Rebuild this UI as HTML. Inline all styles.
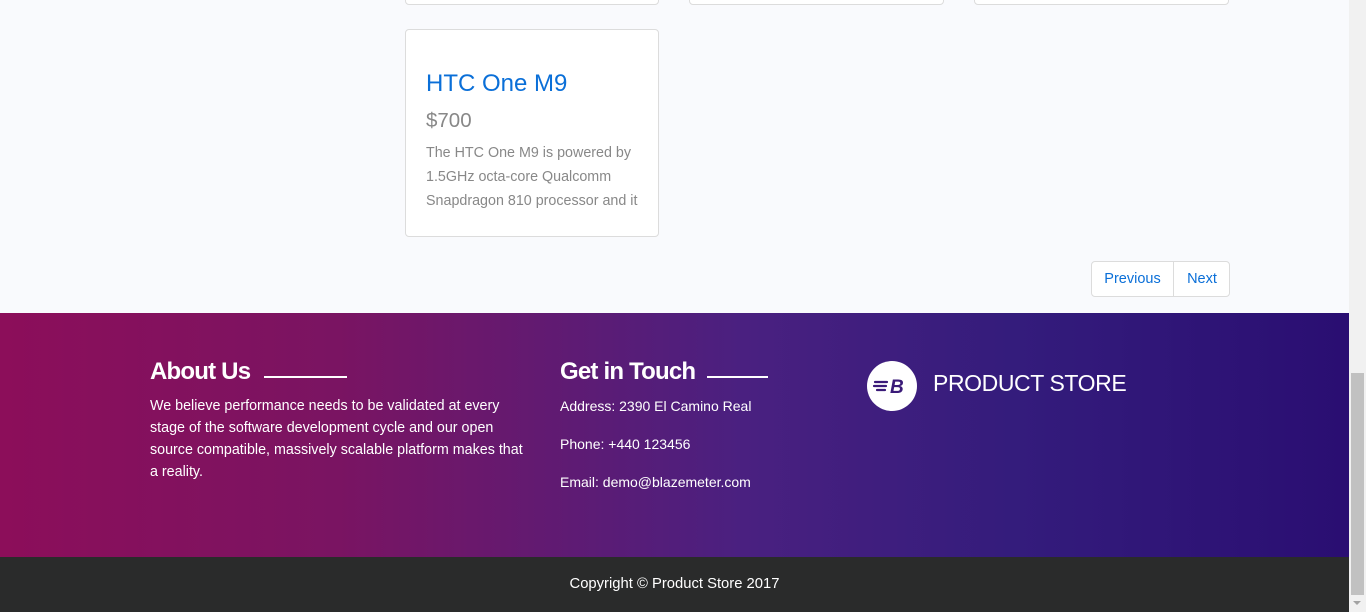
<!DOCTYPE html>
<html><head><meta charset="utf-8"><style>
*{box-sizing:border-box;margin:0;padding:0}
body{width:1366px;height:612px;overflow:hidden;background:#f1f1f1;font-family:"Liberation Sans",sans-serif;position:relative}
.page{position:absolute;left:0;top:0;width:1349px;height:612px;background:#f9fafd}
.card{position:absolute;background:#fff;border:1px solid #dcdcdc;border-radius:4px}
.footer{position:absolute;left:0;top:313px;width:1349px;height:244px;background:linear-gradient(90deg,#8c0e5a 0%,#7a1462 25%,#4a2080 55%,#341c7c 75%,#2a0e72 100%);color:#fff}
.bottom{position:absolute;left:0;top:557px;width:1349px;height:55px;background:#2a2b2b;color:#fff;font-size:14.8px;text-align:center;line-height:54px}
h3{position:absolute;font-size:24px;font-weight:bold;letter-spacing:-0.8px}
.line{position:absolute;height:2px;background:#fff}
.txt{position:absolute;font-size:14px;line-height:22px;white-space:nowrap}
.sb{position:absolute;left:1349px;top:0;width:17px;height:612px;background:#f1f1f1}
.thumb{position:absolute;left:1351px;top:373px;width:13px;height:222px;background:#c1c1c1}
</style></head><body>
<div class="page">
<div class="card" style="left:405px;top:-10px;width:254px;height:15px"></div>
<div class="card" style="left:689px;top:-10px;width:255px;height:15px"></div>
<div class="card" style="left:974px;top:-10px;width:255px;height:15px"></div>
<div class="card" style="left:405px;top:29px;width:254px;height:208px">
<div style="position:absolute;left:20px;top:40px;font-size:24px;color:#0a6fd8">HTC One M9</div>
<div style="position:absolute;left:20px;top:79px;font-size:20.5px;color:#888">$700</div>
<div style="position:absolute;left:20px;top:111px;font-size:14.3px;line-height:24px;color:#888;width:232px;white-space:nowrap">The HTC One M9 is powered by<br>1.5GHz octa-core Qualcomm<br>Snapdragon 810 processor and it</div>
</div>
<div style="position:absolute;left:1091px;top:261px;width:139px;height:36px;border:1px solid #dcdcdc;border-radius:4px;background:#fff;font-size:14.5px;color:#0a6fd8">
<div style="position:absolute;left:0;top:0;width:82px;height:34px;line-height:34px;text-align:center;border-right:1px solid #dcdcdc">Previous</div>
<div style="position:absolute;left:82px;top:0;width:56px;height:34px;line-height:34px;text-align:center">Next</div>
</div>
</div>
<div class="footer">
<h3 style="left:150px;top:45px">About Us</h3>
<div class="line" style="left:264px;top:63px;width:83px"></div>
<div class="txt" style="left:150px;top:82px;font-size:14.3px">We believe performance needs to be validated at every<br>stage of the software development cycle and our open<br>source compatible, massively scalable platform makes that<br>a reality.</div>
<h3 style="left:560px;top:45px">Get in Touch</h3>
<div class="line" style="left:707px;top:63px;width:61px"></div>
<div class="txt" style="left:560px;top:82px">Address: 2390 El Camino Real</div>
<div class="txt" style="left:560px;top:120px">Phone: +440 123456</div>
<div class="txt" style="left:560px;top:158px">Email: demo@blazemeter.com</div>
<div style="position:absolute;left:867px;top:48px;width:50px;height:50px;border-radius:50%;background:#fff">
<svg width="50" height="50" viewBox="0 0 50 50"><g stroke="#3a1a78" stroke-width="2.2" stroke-linecap="round"><line x1="8" y1="21" x2="20" y2="21"/><line x1="7" y1="25" x2="19" y2="25"/><line x1="10" y1="29" x2="18" y2="29"/></g><text x="23" y="32" font-family="Liberation Sans" font-weight="bold" font-style="italic" font-size="19" fill="#3a1a78">B</text></svg>
</div>
<div style="position:absolute;left:933px;top:57px;font-size:23px;letter-spacing:-0.4px">PRODUCT STORE</div>
</div>
<div class="bottom">Copyright © Product Store 2017</div>
<div class="sb"></div><div class="thumb"></div>
<div style="position:absolute;left:1353px;top:601px;width:0;height:0;border-left:4px solid transparent;border-right:4px solid transparent;border-top:4px solid #a3a3a3"></div>
</body></html>
